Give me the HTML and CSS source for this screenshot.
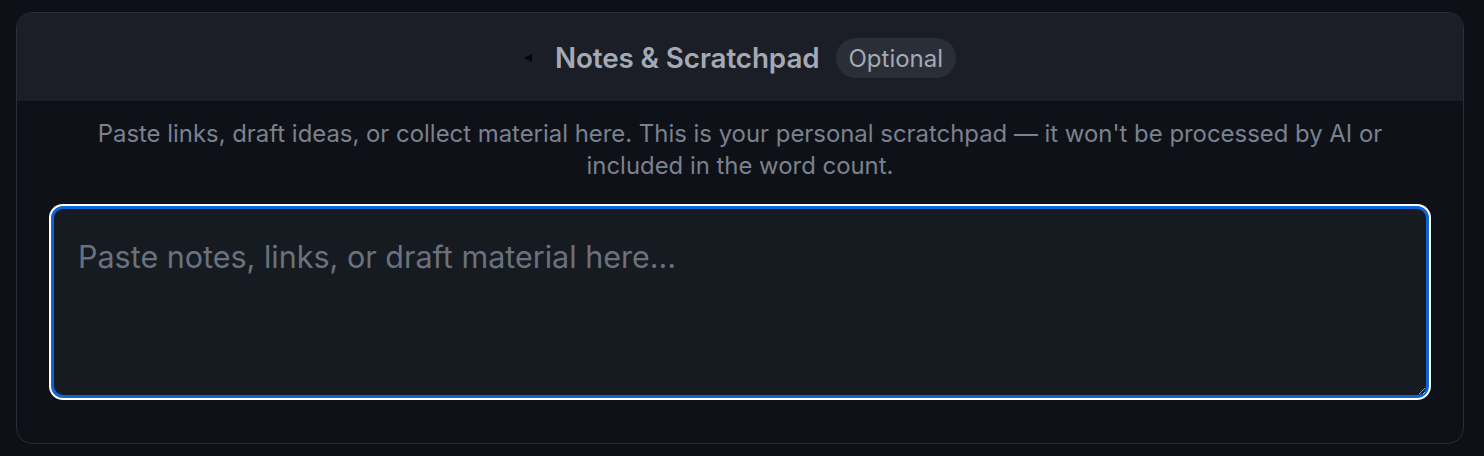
FILE: index.html
```html
<!DOCTYPE html>
<html lang="en">
<head>
<meta charset="utf-8">
<title>Notes &amp; Scratchpad</title>
<link rel="stylesheet" href="styles.css">
</head>
<body>
<section class="card">
  <header class="card-header">
    <span class="caret" aria-hidden="true"></span>
    <h2 class="title">Notes &amp; Scratchpad</h2>
    <span class="badge">Optional</span>
  </header>
  <div class="card-body">
    <p class="hint">Paste links, draft ideas, or collect material here. This is your personal scratchpad — it won't be processed by AI or included in the word count.</p>
    <textarea class="notes" placeholder="Paste notes, links, or draft material here..."></textarea>
  </div>
</section>
</body>
</html>
```

FILE: styles.css
```css
* { box-sizing: border-box; }

html, body {
  background: #0d1017;
}

body {
  margin: 0;
  padding: 12px 20px 0 16px;
  font-family: Inter, "Noto Sans", "Liberation Sans", sans-serif;
}

.card {
  border: 1px solid #2a2e36;
  border-radius: 16px;
  background: #0e1118;
  overflow: hidden;
}

.card-header {
  height: 88px;
  background: #1b1e26;
  display: flex;
  align-items: center;
  justify-content: center;
  padding-top: 2px;
}

.caret {
  width: 0;
  height: 0;
  border-top: 4.5px solid transparent;
  border-bottom: 4.5px solid transparent;
  border-right: 8px solid #050608;
  margin-right: 23px;
}

.title {
  margin: 0;
  font-size: 27.8px;
  font-weight: 600;
  color: #a4a9b6;
  letter-spacing: -0.1px;
}

.badge {
  margin-left: 16px;
  height: 40px;
  padding: 0 13px;
  display: inline-flex;
  align-items: center;
  border-radius: 20px;
  background: #2a2e37;
  color: #a4a9b6;
  font-size: 24px;
  font-weight: 400;
}

.card-body {
  padding: 17px 32px 45px;
}

.hint {
  margin: 0 auto 24px;
  max-width: 1310px;
  text-align: center;
  font-size: 23.9px;
  line-height: 32px;
  color: #7b818d;
}

.notes {
  display: block;
  width: calc(100% - 4px);
  margin: 0 auto;
  height: 192px;
  padding: 26px 24px 20px;
  background: #161b22;
  border: 3px solid #0f63d8;
  border-radius: 12px;
  box-shadow: 0 0 0 2px #ffffff;
  outline: none;
  color: #c9d1d9;
  font-family: inherit;
  font-size: 30.5px;
  line-height: 44px;
  resize: vertical;
}

.notes::placeholder {
  color: #6b717d;
}
```
